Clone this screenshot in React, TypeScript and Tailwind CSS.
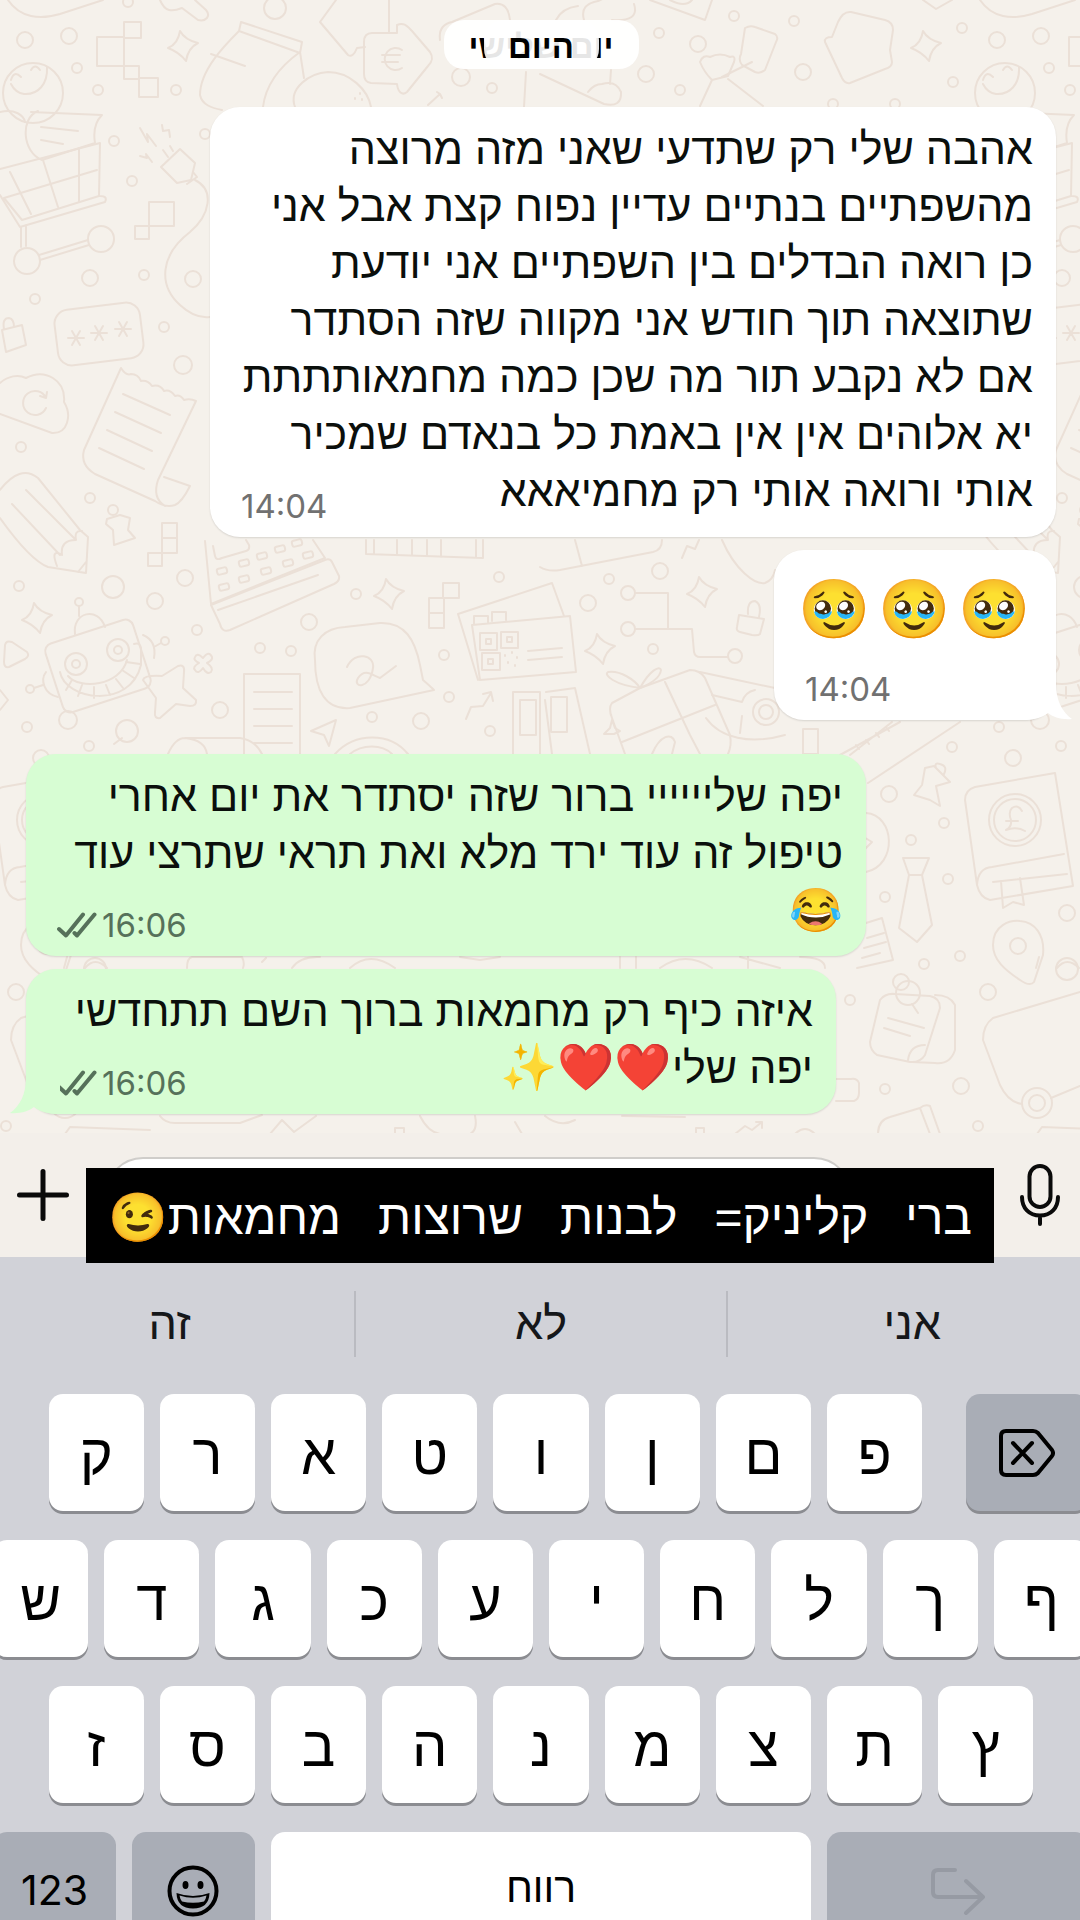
import clsx from "clsx";
import type { ReactNode } from "react";

const topRow = ["ק", "ר", "א", "ט", "ו", "ן", "ם", "פ"];
const middleRow = ["ש", "ד", "ג", "כ", "ע", "י", "ח", "ל", "ך", "ף"];
const lowerRow = ["ז", "ס", "ב", "ה", "נ", "מ", "צ", "ת", "ץ"];
const suggestions = ["זה", "לא", "אני"];
const stickerWords = ["ברי", "קליניק=", "לבנות", "שרוצות"];

// [cx, cy, r]
const dots = [
  [25, 40, 8], [69, 36, 8], [128, 2, 5], [77, 68, 5], [98, 90, 5], [176, 90, 5], [114, 141, 5],
  [205, 134, 5], [132, 181, 5], [144, 275, 5], [90, 278, 8], [193, 279, 8], [35, 299, 5],
  [164, 327, 5], [183, 365, 9], [21, 447, 5], [90, 498, 5], [461, 77, 9], [492, 88, 5], [275, 8, 11],
  [33, 93, 30], [27, 261, 13], [101, 239, 13], [19, 586, 5], [113, 587, 11], [155, 601, 8],
  [185, 578, 8], [79, 602, 4], [309, 622, 8], [197, 630, 5], [260, 648, 5], [291, 651, 5],
  [356, 594, 5], [220, 710, 8], [127, 731, 11], [68, 720, 9], [27, 727, 5], [89, 746, 5],
  [372, 717, 5], [421, 721, 8], [444, 655, 5], [449, 697, 5], [490, 731, 5], [499, 577, 5],
  [16, 992, 8], [6, 1126, 5], [734, 16, 5], [794, 21, 5], [659, 33, 5], [698, 44, 8],
  [646, 74, 8], [680, 90, 5], [803, 72, 8], [833, 104, 5], [895, 104, 5], [962, 28, 5],
  [953, 82, 5], [609, 579, 5], [660, 571, 8], [588, 603, 8], [628, 593, 7], [628, 629, 7],
  [735, 656, 7], [653, 649, 5], [952, 747, 5], [889, 794, 8], [944, 823, 5], [911, 840, 5],
  [948, 879, 5], [885, 897, 5], [960, 956, 5], [924, 964, 5], [850, 1000, 5], [961, 1086, 8],
  [885, 1089, 5], [901, 982, 8], [908, 993, 12], [766, 712, 13], [766, 712, 7], [76, 664, 11],
  [76, 664, 4], [118, 650, 11], [118, 650, 4], [165, 641, 4], [30, 689, 4], [41, 758, 8],
  [43, 820, 26], [43, 820, 21], [95, 913, 8], [95, 969, 11], [46, 946, 8], [65, 1103, 15],
  [65, 1103, 8], [113, 510, 5],
];

// [x, y, width, height]
const boxes = [
  [124, 22, 17, 16], [97, 37, 27, 29], [124, 66, 15, 13], [139, 78, 19, 19], [149, 202, 25, 24],
  [135, 226, 14, 13], [162, 523, 15, 15], [162, 538, 15, 15], [148, 553, 14, 13],
  [443, 583, 16, 15], [429, 598, 15, 15], [429, 613, 15, 15], [480, 633, 17, 17],
  [501, 632, 17, 16], [482, 653, 18, 17], [486, 639, 5, 5], [507, 637, 5, 5], [488, 659, 5, 5],
  [520, 700, 16, 35], [551, 697, 16, 35], [803, 729, 15, 25],
];

const calculatorKeys = [
  [222, 571], [244, 563], [262, 556], [280, 549], [297, 543],
  [224, 587], [244, 579], [266, 571], [288, 563], [308, 555],
];

const sparkles = [
  [183, 46], [926, 46], [37, 618], [389, 594], [702, 592], [600, 649],
];

const doodles = [
  // top strip: blob, shovel, sack, price arrow, loaf
  "M8 0C20 18 40 20 60 14L103 0",
  "M124 38V66",
  "M11 80Q14 70 21 77M31 70Q35 63 40 70M47 67C48 84 38 95 24 94C17 93 13 88 11 84",
  "M160 0C165 12 172 12 182 8L198 20C206 22 211 16 206 10L195 0",
  "M239 31L241 22L302 42L300 53ZM239 31C225 45 200 70 200 95C202 105 212 108 222 110M300 52C275 70 265 90 263 107M211 54L245 66M300 52L304 78",
  "M372 33H397V25C404 22 407 26 412 31L430 52C434 58 432 62 428 66L407 92C402 96 398 92 397 84L371 83Q364 82 364 74V42Q364 33 372 33Z",
  "M402 50A11 11 0 1 0 402 68M382 55H400M382 62H398",
  "M336 0L320 22L348 55Q353 58 357 48L365 47M389 0V33",
  "M295 107C288 88 310 73 328 72C350 72 368 90 371 107M360 93v1M355 98v1M362 99v1",
  "M440 40Q438 25 452 22L495 4Q508 2 510 20",
  "M428 105L440 94L437 92M440 94L442 98M524 107L526 72",
  "M556 20Q562 8 578 6M584 20Q580 6 594 2Q604 0 604 -4M612 20Q640 22 634 4",
  "M540 74L604 104Q622 108 621 92Q616 80 602 84Q594 84 588 92M611 70L610 84",
  "M650 0L705 20L712 0M670 0Q685 8 692 0",
  "M745 28Q750 25 755 27L775 34Q779 37 776 42L765 70Q760 74 755 72L742 65Q738 60 741 54ZM752 62L722 77",
  "M700 62Q703 54 710 57Q720 52 730 57Q736 55 734 62L728 76L712 80Q704 72 700 62M712 80L700 106M728 79L763 106",
  "M851 12L885 20Q893 22 893 30L890 50L892 62Q892 67 885 69L850 83Q845 84 842 78L825 42Q824 37 832 37L838 22Q843 11 851 12Z",
  "M923 0L936 9L952 0",
  // scroll, shopping cart, plug with cable
  "M0 112C15 108 24 116 25 122M31 112L102 115Q92 125 95 143L42 160C22 152 20 118 38 111M41 127L78 131M41 140L63 144",
  "M0 169L100 143L99 196L22 220L4 198M10 172L31 214M43 160L58 207M79 148V202M4 198L97 170M0 195L20 227L105 202Q108 196 100 196M21 227V247M26 225V246M39 255L88 240M40 260L89 245",
  "M140 128L148 142L147 134L156 146M162 125L163 131L169 130L170 137M140 156L147 158L146 154L152 162M163 150L168 157M170 146L173 151",
  "M161 167L180 149L195 163L191 180L177 183ZM193 172L197 177L187 184M195 180C215 190 210 215 190 232C160 255 158 285 180 305Q195 319 210 317",
  // password card, lock, sync cloud, receipt
  "M68 338H84M72 331L80 345M80 331L72 345M91 333H107M95 326L103 340M103 326L95 340M115 329H131M119 322L127 336M127 322L119 336",
  "M2 330L22 325L26 345L6 352ZM4 329Q2 318 9 318Q14 319 14 327",
  "M0 383C8 376 18 374 26 378C45 368 66 380 64 402C72 415 68 434 52 433L0 414M46 398A12 12 0 1 0 46 408M40 396L46 398L47 392",
  "M121 368L84 450Q80 465 95 474L155 501Q165 508 175 505Q182 502 190 486L164 477M121 368Q126 376 131 374Q138 374 141 381Q148 380 152 386Q160 384 164 391Q170 389 175 396Q180 394 184 400Q190 398 196 401L158 480Q152 498 165 506",
  "M123 394L170 415M115 412L161 433M107 430L152 451M99 448L144 469",
  // pencil and pin
  "M0 490Q20 464 38 478L80 530L88 537L86 573L48 567Q30 560 0 518M12 504L60 555M26 490L76 540M57 566Q50 548 62 555Q60 540 76 540Q74 530 82 531M78 572L86 562",
  "M107 519L120 515L130 518L128 530L135 538L114 545L113 530L106 524Z",
  // calculator, robot, star
  "M205 541L211 604L325 558L313 540M213 546L215 556Q216 561 222 558L246 551Q250 550 249 545L246 540",
  "M211 605L325 560Q330 558 332 562L339 576Q340 581 334 584L230 630Q222 633 220 624ZM218 610L318 575",
  "M60 672C65 700 130 710 141 665V648Q140 642 134 644M68 676C80 690 120 686 127 660M72 680L66 690M82 685L78 696M94 687V698M106 685L110 695M116 679L123 688M122 670L134 678M126 662L140 664",
  "M79 606V616M75 634C72 612 98 606 105 627M143 635Q157 641 154 658M154 647L161 643M46 672C40 680 44 694 58 697M34 688L43 685",
  "M143 680Q144 675 162 676L178 666Q185 664 184 672L183 688L196 700Q197 706 190 706L176 704L160 718Q154 719 155 712L156 698Z",
  "M195 657Q197 652 203 658Q209 650 212 657Q213 660 207 663Q214 668 211 672Q207 675 203 668Q198 675 195 670Q192 667 199 663Q193 660 195 657Z",
  "M5 645Q6 640 12 642L27 652Q30 656 25 659L9 667Q4 668 4 662ZM0 690L8 700L0 710",
  "M244 754V674H300V754M254 692H292M254 709H292M254 726H292M254 743H292",
  // signed message, paper plane, scroll ends
  "M315 660C312 640 325 628 345 627L380 623C405 622 415 640 420 665L423 680Q430 686 434 690L350 708C325 710 315 690 315 660M347 667C355 650 375 655 373 668C370 690 352 688 358 678C365 668 372 675 380 678L396 666",
  "M311 731L336 720L329 746L324 735ZM168 754Q175 738 185 738H240Q255 740 262 754M185 738Q205 740 207 754M335 754C355 732 390 732 408 754M350 754C362 744 382 744 392 754M114 744L122 738",
  "M366 540V554L483 558V540M397 555V540M412 555V540M427 556V540M441 557V540M374 540V554M476 540V557",
  "M552 583L458 614L478 680M552 583L564 616M472 625L570 616L576 672L480 680ZM474 624V616H488V622M492 621V612H506V620M505 655v1M512 652v1M517 657v1M508 662v1M515 665v1M528 651L562 648M528 660L562 657",
  "M466 719L471 707L483 706L491 693M483 694L491 692L493 701",
  "M513 754V692H540V754M546 692L575 688L590 754M545 700L552 754",
  // parcel, circuit, padlock, gift
  "M540 567Q548 572 560 570L653 552Q662 550 662 540M575 540L582 566",
  "M682 558L687 546L695 549L699 540M722 540C735 570 755 585 765 583Q773 580 775 570",
  "M635 593H668V629M635 629H692L694 652Q695 657 700 657H728",
  "M739 615L764 619L760 634Q758 636 752 635L740 632Q736 631 737 627ZM748 614Q747 601 755 601Q762 604 759 617",
  "M640 688L612 703Q608 708 612 718L625 754M640 688L690 670Q700 670 705 678L730 735Q732 745 728 754M665 682L690 735L700 754M622 742L715 705M652 754C660 735 672 732 675 742L672 754",
  "M640 688C615 685 603 675 608 672C620 670 635 680 640 688C650 670 660 665 661 670C660 678 650 684 640 688",
  "M700 672L775 688M712 695L742 702Q745 692 755 690M706 718C720 738 750 745 785 735M742 716L740 733M604 734L610 728L612 720L615 728L620 731L614 734Z",
  "M840 755L900 722M850 755L892 722M868 783L960 722M856 745L859 749M866 740L869 744M876 733L879 737M886 727L889 731",
  "M925 768L934 766L950 782L936 786L940 806L930 800L914 795L922 785ZM936 768Q934 762 940 764Q948 766 944 774",
  // ledger book, tie, map pin, sticky notes, car
  "M-7 800Q-7 790 3 787L83 773L101 886L18 900Q8 898 5 885ZM5 885Q6 868 20 867L92 854M21 882L95 874M29 881L31 908L41 902L52 905L48 878",
  "M50 811Q46 804 40 808Q36 812 39 820Q40 827 34 830Q44 826 53 831M34 821H46",
  "M903 858H929L922 875H909ZM909 875L899 928L917 942L932 925L922 875",
  "M866 813C895 815 898 865 866 872M862 836L872 842L864 850",
  "M21 945C21 925 38 920 48 921C63 922 73 935 71 955L62 982Q58 987 48 980C33 970 21 960 21 945Z",
  "M866 923L882 918L893 960L857 968M867 938L884 933M864 948L886 942M862 958L880 953",
  "M880 1000Q885 993 895 994L930 996Q940 998 940 1008L925 1055Q920 1063 910 1062L877 1055Q870 1050 870 1042ZM935 995Q950 995 955 1005V1050Q950 1065 935 1063L912 1062M925 1045Q910 1045 908 1060M912 1004L918 1013M888 1018L924 1028M884 1028L910 1036",
  "M108 992L21 1018Q11 1025 11 1040L28 1085Q36 1102 50 1104M79 1098L108 1086",
  "M878 1134Q878 1120 890 1117L920 1108L930 1134M920 1108Q925 1104 930 1106L940 1134M836 1101H854Q859 1099 859 1093V1083Q857 1078 851 1079H836",
  // slivers between the replies
  "M67 957L64 968M85 968Q95 956 107 968M187 968Q187 958 192 957H242Q245 963 243 968M262 962L266 958M292 968Q300 956 320 957M350 968Q370 950 395 968M460 957L480 960L500 957",
  "M620 957V968M636 957V968M660 968Q685 950 712 968M740 957L780 968M748 957V968M800 957Q825 957 825 968",
  "M65 1134L70 1127L150 1130M160 1116Q165 1123 175 1123H240L262 1115M270 1134L282 1120L294 1132L316 1116M420 1116Q428 1132 440 1134M475 1116Q478 1130 470 1134M395 1134V1128H404V1134M515 1122L522 1134",
  "M545 1116Q560 1128 575 1120M622 1116L685 1117M696 1134V1128H704V1134M735 1134L745 1126L752 1130L762 1122M756 1122H762V1128M795 1134Q805 1124 815 1134",
];

function WallpaperTile({ id }: { id: string }) {
  return (
    <g id={id}>
      {dots.map(([cx, cy, r]) => (
        <circle key={`${cx}-${cy}-${r}`} cx={cx} cy={cy} r={r} />
      ))}
      {boxes.map(([x, y, width, height]) => (
        <rect key={`${x}-${y}`} x={x} y={y} width={width} height={height} />
      ))}
      {calculatorKeys.map(([x, y]) => (
        <rect key={`${x}-${y}`} x={x - 5} y={y - 3} width="10" height="6" rx="2" transform={`rotate(-14 ${x} ${y})`} />
      ))}
      {sparkles.map(([x, y]) => (
        <path
          key={`${x}-${y}`}
          d="M-3 -15Q2 -6 15 -3Q5 2 3 15Q-4 6 -15 2Q-5 -2 -3 -15Z"
          transform={`translate(${x} ${y})`}
        />
      ))}
      <rect x="56" y="306" width="86" height="56" rx="14" transform="rotate(-7 99 334)" />
      <rect x="52" y="630" width="92" height="72" rx="8" transform="rotate(-18 98 666)" />
      {doodles.map((d) => (
        <path key={d} d={d} />
      ))}
    </g>
  );
}

function Wallpaper() {
  return (
    <svg
      aria-hidden
      className="absolute top-0 left-0 h-[1140px] w-[1944px] fill-none stroke-[#ebe0d7]"
      viewBox="0 0 1944 1140"
      strokeWidth="2"
      strokeLinejoin="round"
      strokeLinecap="round"
    >
      <WallpaperTile id="wallpaper" />
      <use href="#wallpaper" x="972" />
    </svg>
  );
}

function Emoji({ children, className }: { children: string; className?: string }) {
  return <span className={clsx("leading-none font-['Noto_Color_Emoji']", className)}>{children}</span>;
}

function Ticks() {
  return (
    <svg aria-hidden width="40" height="26" viewBox="0 0 40 26" fill="none" stroke="currentColor" strokeWidth="4" strokeLinecap="round" strokeLinejoin="round">
      <path d="M2 17L9 23.5L26 2.5" />
      <path d="M17.5 21L20 23.5L37.5 2.5" />
    </svg>
  );
}

function Tail({ outgoing }: { outgoing?: boolean }) {
  return (
    <svg
      aria-hidden
      width="50"
      height="36"
      viewBox="0 0 50 36"
      className={clsx(
        "absolute bottom-0",
        outgoing ? "-left-4 -scale-x-100 fill-[#d7fdd3]" : "-right-4 fill-white",
      )}
    >
      <path d="M34 0C34 16 40 28 50 35C40 36 31 33 26 29C20 34 10 36 0 36V0Z" />
    </svg>
  );
}

type BubbleProps = {
  time: string;
  outgoing?: boolean;
  tail?: boolean;
  className?: string;
  children: ReactNode;
};

function Bubble({ time, outgoing, tail, className, children }: BubbleProps) {
  return (
    <article
      className={clsx(
        "relative grid w-full grid-cols-1 rounded-[30px] pt-[14px] pr-[23px] pb-[13px] pl-[31px] shadow-[0_1px_2px_rgba(0,0,0,0.12)]",
        outgoing ? "self-end bg-[#d7fdd3]" : "self-start bg-white",
        className,
      )}
    >
      <div className="mb-1 text-[43px] leading-[57px] whitespace-nowrap text-[#0b0f0c] [grid-area:1/1]">
        {children}
      </div>
      <div
        dir="ltr"
        className={clsx(
          "flex items-center gap-[5px] self-end justify-self-end font-[Inter] text-[33px] leading-9 [grid-area:1/1]",
          outgoing ? "text-[#56715a]" : "text-[#717171]",
        )}
      >
        {outgoing && <Ticks />}
        <time>{time}</time>
      </div>
      {tail && <Tail outgoing={outgoing} />}
    </article>
  );
}

function Key({ children, className, dark, label }: { children: ReactNode; className?: string; dark?: boolean; label?: string }) {
  return (
    <button
      type="button"
      aria-label={label}
      className={clsx(
        "col-span-4 mx-2 flex h-[117px] items-center justify-center rounded-[14px] text-[56px] leading-none text-black shadow-[0_3px_0_#8b8c91]",
        dark ? "bg-[#a9adb6]" : "bg-white",
        className,
      )}
    >
      {children}
    </button>
  );
}

function Keyboard() {
  return (
    <section aria-label="מקלדת" dir="ltr" className="-mr-[17px] -mb-[29px] -ml-[15px] shrink-0 bg-[#d1d2d8]">
      <div className="flex h-[137px] items-center pb-1">
        {suggestions.map((word, i) => (
          <button
            key={word}
            type="button"
            className={clsx("h-[66px] flex-1 text-[45px] leading-none text-[#15171a]", i > 0 && "border-l-2 border-[#babbc1]")}
          >
            {word}
          </button>
        ))}
      </div>
      <div className="grid grid-cols-[repeat(40,minmax(0,1fr))] gap-y-[29px]">
        {topRow.map((letter, i) => (
          <Key key={letter} className={clsx("pt-1", i === 0 && "col-start-3")}>
            {letter}
          </Key>
        ))}
        <Key dark label="מחיקה" className="col-span-5 col-start-36">
          <svg width="56" height="48" viewBox="0 0 56 48" fill="none" stroke="currentColor" strokeWidth="4" strokeLinecap="round" strokeLinejoin="round">
            <path d="M7 2H34Q37 2 39 4L53 21Q55 24 53 27L39 44Q37 46 34 46H7Q2 46 2 41V7Q2 2 7 2Z" />
            <path d="M14 14L33 34M33 14L14 34" />
          </svg>
        </Key>
        {middleRow.map((letter) => (
          <Key key={letter} className="pt-1">
            {letter}
          </Key>
        ))}
        {lowerRow.map((letter, i) => (
          <Key key={letter} className={clsx("pt-1", i === 0 && "col-start-3")}>
            {letter}
          </Key>
        ))}
        <Key dark className="col-span-5 col-start-1">
          <span className="font-[Inter] text-[41px]">123</span>
        </Key>
        <Key dark label="אימוג׳י" className="col-span-5">
          <svg width="52" height="52" viewBox="0 0 52 52" fill="none">
            <circle cx="26" cy="26" r="23.5" stroke="currentColor" strokeWidth="4" />
            <ellipse cx="18.5" cy="20" rx="3" ry="4" fill="currentColor" />
            <ellipse cx="33.5" cy="20" rx="3" ry="4" fill="currentColor" />
            <path d="M9.5 28Q26 34 42.5 28Q42 43.5 26 43.5Q10 43.5 9.5 28Z" fill="currentColor" />
            <path d="M12.5 30.5Q26 35 39.5 30.5Q39 34 37 36.5Q26 39 15 36.5Q13 34 12.5 30.5Z" fill="#a9adb6" />
          </svg>
        </Key>
        <Key className="col-span-20 pb-1">
          <span className="text-[41px]">רווח</span>
        </Key>
        <Key dark label="שורה חדשה" className="col-span-10">
          <svg width="54" height="48" viewBox="0 0 54 48" fill="none" stroke="#969aa3" strokeWidth="4" strokeLinecap="round" strokeLinejoin="round">
            <path d="M24 3H7Q2 3 2 8V25Q2 30 7 30H51M35 14L52 30L35 46" />
          </svg>
        </Key>
      </div>
    </section>
  );
}

function Composer() {
  return (
    <form dir="ltr" className="relative z-10 flex h-[124px] shrink-0 items-center bg-[#f3efea] px-[17px]">
      <button type="button" aria-label="צירוף">
        <svg width="52" height="52" viewBox="0 0 52 52" stroke="#0a0a0a" strokeWidth="5" strokeLinecap="round">
          <path d="M26 2.5V49.5M2.5 26H49.5" />
        </svg>
      </button>
      <input
        type="text"
        aria-label="הודעה"
        className="mr-[165px] ml-9 h-[76px] min-w-0 flex-1 rounded-full border-2 border-[#cfcdca] bg-white px-6"
      />
      <button type="button" aria-label="הקלטה">
        <svg width="46" height="64" viewBox="0 0 46 64" fill="none" stroke="#0a0a0a" strokeWidth="4" strokeLinecap="round">
          <rect x="12.5" y="3" width="21" height="41" rx="10.5" />
          <path d="M5 34C5 45 12 52.5 23 52.5C34 52.5 41 45 41 34M23 53V61" />
        </svg>
      </button>
      <p
        dir="rtl"
        className="absolute inset-x-[86px] top-[35px] flex h-[95px] items-center justify-between bg-black px-[22px] pt-1 text-[48px] leading-none whitespace-nowrap text-white"
      >
        {stickerWords.map((word) => (
          <span key={word}>{word} </span>
        ))}
        <span>
          מחמאות
          <Emoji>😉</Emoji>
        </span>
      </p>
    </form>
  );
}

export default function App() {
  return (
    <div dir="rtl" lang="he" className="flex h-screen flex-col overflow-hidden bg-[#f5f1eb] font-['Liberation_Sans',sans-serif]">
      <main className="relative min-h-0 flex-1 overflow-hidden">
        <Wallpaper />
        <div className="relative flex flex-col pt-5 pr-6 pl-[26px]">
          <div className="relative mb-[38px] flex h-[49px] min-w-[195px] items-center justify-center self-center rounded-[20px] bg-white/95 pt-1 text-[33px] leading-none font-bold text-black">
            <span>יום שלישי</span>
            <div className="absolute inset-y-0 left-10 flex w-[115px] items-center justify-center rounded-[20px] bg-white/90 pt-1">
              היום
            </div>
          </div>

          <Bubble time="14:04" className="mb-[13px] max-w-[846px]">
            אהבה שלי רק שתדעי שאני מזה מרוצה
            <br />
            מהשפתיים בנתיים עדיין נפוח קצת אבל אני
            <br />
            כן רואה הבדלים בין השפתיים אני יודעת
            <br />
            שתוצאה תוך חודש אני מקווה שזה הסתדר
            <br />
            אם לא נקבע תור מה שכן כמה מחמאותתתת
            <br />
            יא אלוהים אין אין באמת כל בנאדם שמכיר
            <br />
            אותי ורואה אותי רק מחמיאאא
          </Bubble>

          <Bubble time="14:04" tail className="mb-[34px] h-[170px] max-w-[282px]">
            <div className="mr-[2px] flex gap-2 pt-4">
              <Emoji className="text-[58px]">🥹</Emoji>
              <Emoji className="text-[58px]">🥹</Emoji>
              <Emoji className="text-[58px]">🥹</Emoji>
            </div>
          </Bubble>

          <Bubble outgoing time="16:06" className="mb-[13px] max-w-[840px]">
            יפה שליייייי ברור שזה יסתדר את יום אחרי
            <br />
            טיפול זה עוד ירד מלא ואת תראי שתרצי עוד
            <br />
            <Emoji>😂</Emoji>
          </Bubble>

          <Bubble outgoing tail time="16:06" className="max-w-[810px]">
            איזה כיף רק מחמאות ברוך השם תתחדשי
            <br />
            יפה שלי
            <Emoji className="text-[46px]">❤️❤️✨</Emoji>
          </Bubble>
        </div>
      </main>
      <Composer />
      <Keyboard />
    </div>
  );
}
